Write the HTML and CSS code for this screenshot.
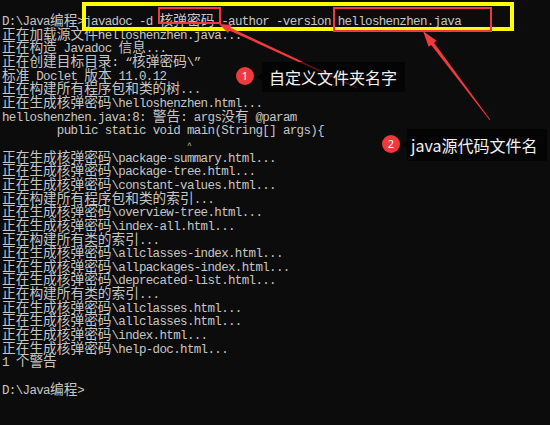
FILE: index.html
```html
<!DOCTYPE html>
<html lang="zh-CN">
<head>
    <meta charset="UTF-8">
    <meta name="viewport" content="width=device-width, initial-scale=1.0">
    <title>javadoc</title>
    <link rel="stylesheet" href="styles.css">
</head>
<body>
    <div class="screen">
<pre class="console">D:\Java<span class="cn">编程</span>&gt;javadoc -d <span class="cn">核弹密码</span> -author -version helloshenzhen.java
<span class="cn">正在加载源文件</span>helloshenzhen.java...
<span class="cn">正在构造</span> Javadoc <span class="cn">信息</span>...
<span class="cn">正在创建目标目录</span>: “<span class="cn">核弹密码</span>\”
<span class="cn">标准</span> Doclet <span class="cn">版本</span> 11.0.12
<span class="cn">正在构建所有程序包和类的树</span>...
<span class="cn">正在生成核弹密码</span>\helloshenzhen.html...
helloshenzhen.java:8: <span class="cn">警告</span>: args<span class="cn">没有</span> @param
        public static void main(String[] args){
                           <span class="caret">^</span>
<span class="cn">正在生成核弹密码</span>\package-summary.html...
<span class="cn">正在生成核弹密码</span>\package-tree.html...
<span class="cn">正在生成核弹密码</span>\constant-values.html...
<span class="cn">正在构建所有程序包和类的索引</span>...
<span class="cn">正在生成核弹密码</span>\overview-tree.html...
<span class="cn">正在生成核弹密码</span>\index-all.html...
<span class="cn">正在构建所有类的索引</span>...
<span class="cn">正在生成核弹密码</span>\allclasses-index.html...
<span class="cn">正在生成核弹密码</span>\allpackages-index.html...
<span class="cn">正在生成核弹密码</span>\deprecated-list.html...
<span class="cn">正在构建所有类的索引</span>...
<span class="cn">正在生成核弹密码</span>\allclasses.html...
<span class="cn">正在生成核弹密码</span>\allclasses.html...
<span class="cn">正在生成核弹密码</span>\index.html...
<span class="cn">正在生成核弹密码</span>\help-doc.html...
1 <span class="cn">个警告</span>

D:\Java<span class="cn">编程</span>&gt;</pre>

        <!-- annotations drawn over the console -->
        <div class="box-yellow"></div>
        <div class="box-red folder"></div>
        <div class="box-red source"></div>

        <svg class="arrows" width="550" height="425" viewBox="0 0 550 425">
            <polygon points="219,24 231.8,25 230.5,27.7 357.2,87.6 356.8,88.4 229.3,30.4 228,33.1" />
            <polygon points="423,31 436.6,40.8 434,42.7 490.3,119.8 489.7,120.2 431.2,44.9 428.6,46.8" />
        </svg>

        <div class="badge one">1</div>
        <div class="tag one">自定义文件夹名字</div>

        <div class="badge two">2</div>
        <div class="tag two">java源代码文件名</div>
    </div>
</body>
</html>
```

FILE: styles.css
```css
* {
    box-sizing: border-box;
    margin: 0;
    padding: 0;
}

body {
    background-color: #0c0c0c;
}

.screen {
    position: relative;
    width: 550px;
    height: 425px;
    overflow: hidden;
    background-color: #0c0c0c;
}

.console {
    padding: 16px 0 0 2px;
    color: #c6c6c6;
    font-family: "Liberation Mono", "DejaVu Sans Mono", monospace;
    font-size: 12.5px;
    letter-spacing: -0.65px;
    line-height: 13.65px;
    white-space: pre;
}

.cn {
    font-family: "Noto Sans CJK SC", sans-serif;
    font-size: 13.7px;
    letter-spacing: 0;
    line-height: 0;
}

.caret {
    font-size: 8px;
    letter-spacing: 0;
}

/* marks */
.box-yellow {
    position: absolute;
    left: 82px;
    top: 2px;
    width: 432px;
    height: 29px;
    border: 4px solid #ffff00;
}

.box-red {
    position: absolute;
    border: 2px solid #ee3a3c;
}

.box-red.folder {
    left: 158px;
    top: 7px;
    width: 63px;
    height: 17px;
}

.box-red.source {
    left: 333px;
    top: 7px;
    width: 159px;
    height: 25px;
}

.arrows {
    position: absolute;
    left: 0;
    top: 0;
}

.arrows polygon {
    fill: #f03a3c;
}

.badge {
    position: absolute;
    width: 18px;
    height: 18px;
    border-radius: 50%;
    background-color: #ee3a3c;
    color: #fff;
    font-family: "Noto Sans", sans-serif;
    font-size: 11px;
    line-height: 18px;
    text-align: center;
}

.badge.one {
    left: 236px;
    top: 67px;
}

.badge.two {
    left: 382px;
    top: 135px;
}

.tag {
    position: absolute;
    display: flex;
    align-items: center;
    background-color: rgba(0, 0, 0, 0.65);
    color: #f2f2f2;
    font-family: "Noto Sans CJK SC", sans-serif;
    font-size: 16px;
    white-space: nowrap;
}

.tag::before {
    content: "";
    position: absolute;
    left: -5px;
    top: 50%;
    margin-top: -4px;
    border-top: 4px solid transparent;
    border-bottom: 4px solid transparent;
    border-right: 5px solid rgba(0, 0, 0, 0.65);
}

.tag.one {
    left: 262px;
    top: 62px;
    width: 143px;
    height: 30px;
    padding-left: 7px;
}

.tag.two {
    left: 407px;
    top: 129px;
    width: 140px;
    height: 32px;
    padding-left: 4px;
}
```
